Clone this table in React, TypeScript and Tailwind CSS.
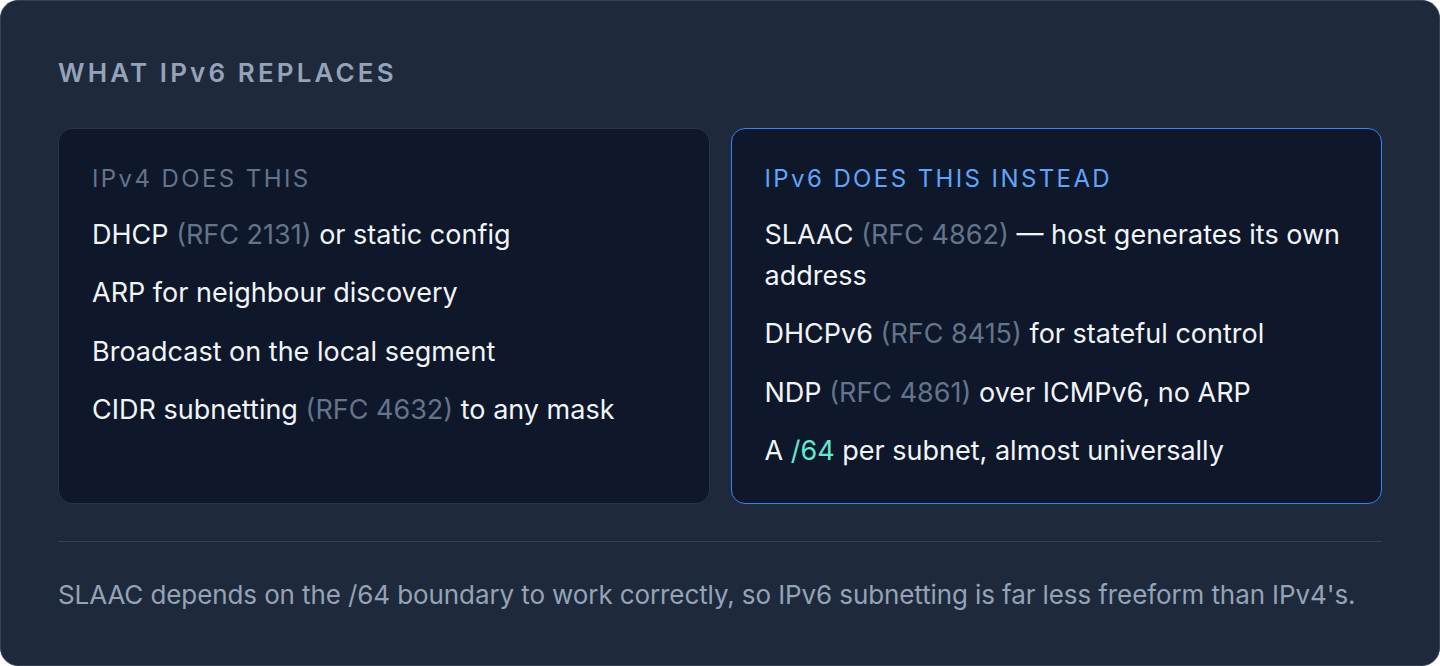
import React from "react";

const Rfc = ({ children }: { children: React.ReactNode }) => (
  <span className="text-[#64748b]">{children}</span>
);

export default function App() {
  return (
    <div className="w-[1440px] h-[666px] bg-white" style={{ fontFamily: "Inter, 'Noto Sans', sans-serif" }}>
      <div className="w-full h-full rounded-[18px] bg-[#1e293b] border border-[#334155] px-[57px] pt-[54px] flex flex-col">
        <h2 className="text-[26px] leading-[36px] font-semibold tracking-[0.12em] text-[#94a3b8]">
          WHAT IPv6 REPLACES
        </h2>
        <div className="mt-[37px] grid grid-cols-2 gap-[21px]">
          <div className="rounded-[14px] bg-[#0f172a] border border-[#293548] px-[33px] pt-[33px] pb-[32px] flex flex-col gap-[17.5px]">
            <div className="text-[24px] leading-[34px] tracking-[0.1em] text-[#64748b]">IPv4 DOES THIS</div>
            <div className="text-[27px] leading-[41px] text-[#f1f5f9]">DHCP <Rfc>(RFC 2131)</Rfc> or static config</div>
            <div className="text-[27px] leading-[41px] text-[#f1f5f9]">ARP for neighbour discovery</div>
            <div className="text-[27px] leading-[41px] text-[#f1f5f9]">Broadcast on the local segment</div>
            <div className="text-[27px] leading-[41px] text-[#f1f5f9]">CIDR subnetting <Rfc>(RFC 4632)</Rfc> to any mask</div>
          </div>
          <div className="rounded-[14px] bg-[#0f172a] border border-[#3b82f6] px-[33px] pt-[33px] pb-[32px] flex flex-col gap-[17.5px]">
            <div className="text-[24px] leading-[34px] tracking-[0.1em] text-[#60a5fa]">IPv6 DOES THIS INSTEAD</div>
            <div className="text-[27px] leading-[41px] text-[#f1f5f9]">SLAAC <Rfc>(RFC 4862)</Rfc> — host generates its own address</div>
            <div className="text-[27px] leading-[41px] text-[#f1f5f9]">DHCPv6 <Rfc>(RFC 8415)</Rfc> for stateful control</div>
            <div className="text-[27px] leading-[41px] text-[#f1f5f9]">NDP <Rfc>(RFC 4861)</Rfc> over ICMPv6, no ARP</div>
            <div className="text-[27px] leading-[41px] text-[#f1f5f9]">A <span className="text-[#5eead4]">/64</span> per subnet, almost universally</div>
          </div>
        </div>
        <div className="mt-[37px] border-t border-[#334155]" />
        <p className="mt-[35px] text-[26px] leading-[36px] tracking-[-0.1px] text-[#94a3b8]">
          SLAAC depends on the /64 boundary to work correctly, so IPv6 subnetting is far less freeform than IPv4's.
        </p>
      </div>
    </div>
  );
}
